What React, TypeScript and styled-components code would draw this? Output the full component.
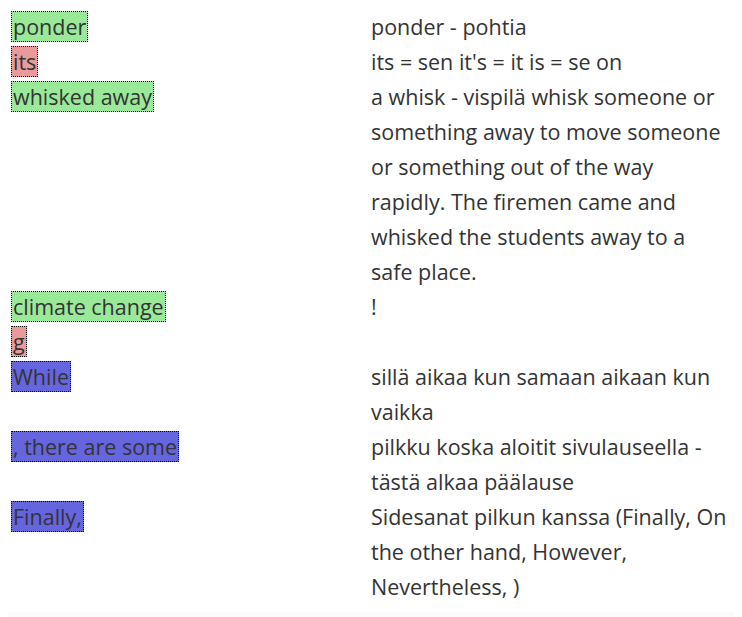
import styled, {createGlobalStyle} from "styled-components";

const GlobalStyle = createGlobalStyle`
  body {
    margin: 8px;
    background: #fff;
    font-family: "Open Sans", "Liberation Sans", sans-serif;
    font-size: 21.5px;
    line-height: 35px;
    color: #333;
    overflow: hidden;
  }
`

type Kind = "known" | "wrong" | "grammar"

const colors: Record<Kind, string> = {
    known: "#99e999",
    wrong: "#e99a9a",
    grammar: "#6565e0",
}

const Table = styled.div`
  display: grid;
  grid-template-columns: 1fr 1fr;
  padding-top: 1px;
`

const Word = styled.div`
  padding-left: 3px;
`

const Mark = styled.span<{ $kind: Kind }>`
  background: ${p => colors[p.$kind]};
  border: 1px dotted #000;
  padding: 0 1px;
`

const Note = styled.div`
  padding-right: 4px;
`

const Footer = styled.div`
  margin: 8px 0 0 -8px;
  width: 100vw;
  height: 20px;
  background: #fbfbfb;
`

const rows: { word: string, kind: Kind, note: string }[] = [
    {word: "ponder", kind: "known", note: "ponder - pohtia"},
    {word: "its", kind: "wrong", note: "its = sen it's = it is = se on"},
    {
        word: "whisked away",
        kind: "known",
        note: "a whisk - vispilä whisk someone or something away to move someone or something out of the way rapidly. The firemen came and whisked the students away to a safe place."
    },
    {word: "climate change", kind: "known", note: "!"},
    {word: "g", kind: "wrong", note: ""},
    {word: "While", kind: "grammar", note: "sillä aikaa kun samaan aikaan kun vaikka"},
    {word: ", there are some", kind: "grammar", note: "pilkku koska aloitit sivulauseella - tästä alkaa päälause"},
    {
        word: "Finally,",
        kind: "grammar",
        note: "Sidesanat pilkun kanssa (Finally, On the other hand, However, Nevertheless, )"
    },
]

export default function App() {
    return (
        <>
            <GlobalStyle/>
            <Table>
                {rows.map((r, i) => (
                    <>
                        <Word key={"w" + i}><Mark $kind={r.kind}>{r.word}</Mark></Word>
                        <Note key={"n" + i}>{r.note}</Note>
                    </>
                ))}
            </Table>
            <Footer/>
        </>
    )
}
